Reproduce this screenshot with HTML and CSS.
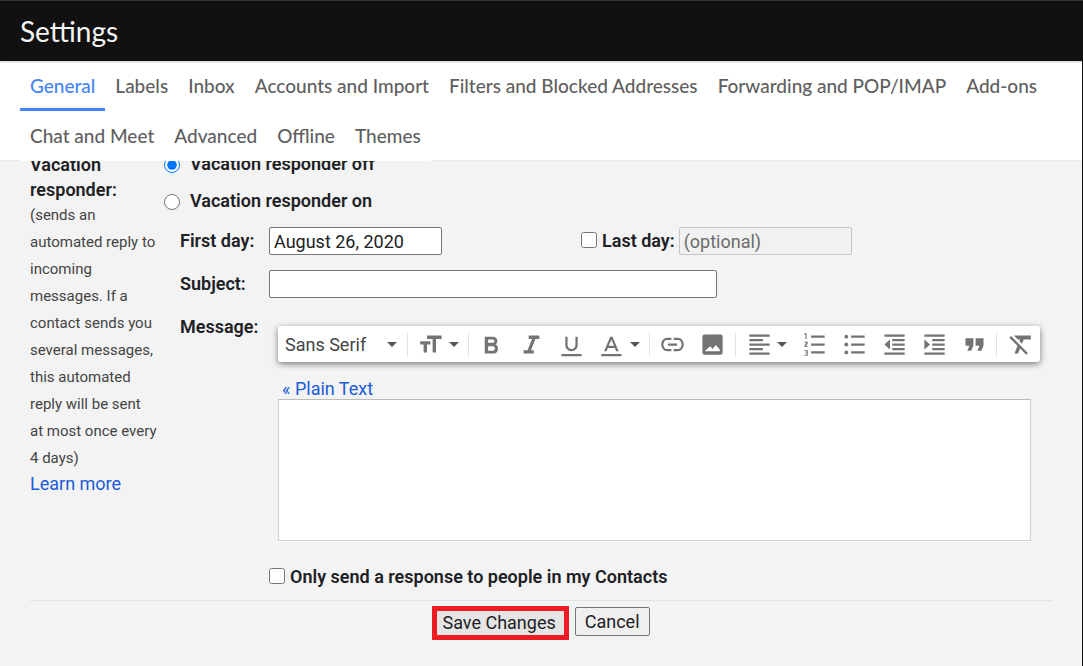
FILE: index.html
```html
<!DOCTYPE html>
<html lang="en">
<head>
<meta charset="utf-8">
<title>Settings</title>
<meta name="viewport" content="width=device-width, initial-scale=1">
<link rel="stylesheet" href="styles.css">
</head>
<body>
<header class="titlebar"><h1>Settings</h1></header>
<div class="page">
  <nav class="tabs" aria-label="Settings sections">
    <a class="tab active" href="#general">General</a>
    <a class="tab" href="#labels">Labels</a>
    <a class="tab" href="#inbox">Inbox</a>
    <a class="tab" href="#accounts">Accounts and Import</a>
    <a class="tab" href="#filters">Filters and Blocked Addresses</a>
    <a class="tab" href="#forwarding">Forwarding and POP/IMAP</a>
    <a class="tab" href="#addons">Add-ons</a>
    <a class="tab" href="#chat">Chat and Meet</a>
    <a class="tab" href="#advanced">Advanced</a>
    <a class="tab" href="#offline">Offline</a>
    <a class="tab" href="#themes">Themes</a>
  </nav>
  <main>
    <form class="settings">
      <section class="setting">
        <div class="about">
          <h2>Vacation responder:</h2>
          <p>(sends an automated reply to incoming messages. If a contact sends you several messages, this automated reply will be sent<br>at most once every<br>4 days)</p>
          <a class="link" href="#learn">Learn more</a>
        </div>
        <div class="controls">
          <label class="radio-row"><input type="radio" name="vacation" checked>Vacation responder off</label>
          <label class="radio-row"><input type="radio" name="vacation">Vacation responder on</label>
          <div class="fields">
            <label for="first">First day:</label>
            <div class="dates">
              <input class="text date" id="first" type="text" value="August 26, 2020">
              <div class="last-day">
                <label class="check"><input type="checkbox">Last day:</label>
                <input class="text date" type="text" placeholder="(optional)" aria-label="Last day" disabled>
              </div>
            </div>
            <label for="subject">Subject:</label>
            <input class="text subject" id="subject" type="text">
            <label class="message-label" for="message">Message:</label>
            <div class="editor">
              <div class="toolbar" role="toolbar" aria-label="Formatting">
                <div class="font-picker"><select aria-label="Font"><option>Sans Serif</option></select><i class="caret"></i></div>
                <div class="group">
                  <button type="button" class="tool menu" aria-label="Size"><svg viewBox="0 0 24 24"><path d="M8 4v3h5v12h3V7h5V4zM2 12h3v7h3v-7h3V9H2z"/></svg><i class="caret"></i></button>
                </div>
                <div class="group">
                  <button type="button" class="tool" aria-label="Bold"><svg viewBox="0 0 24 24"><path transform="translate(0 1)" d="M15.6 10.79c.97-.67 1.65-1.77 1.65-2.79 0-2.26-1.75-4-4-4H6v15h8.04c2.09 0 3.71-1.9 3.71-4.29 0-1.72-.86-3.32-2.15-3.92zM9 6.5h4c.83 0 1.5.67 1.5 1.5s-.67 1.5-1.5 1.5H9v-3zm4.5 10H9v-4h4.5c.83 0 1.5.9 1.5 2s-.67 2-1.5 2z"/></svg></button>
                  <button type="button" class="tool" aria-label="Italic"><svg viewBox="0 0 24 24"><path d="M9.500 4v3h3l-4 10H5v3h9v-3h-2.500l4-10H19V4z"/></svg></button>
                  <button type="button" class="tool" aria-label="Underline"><svg viewBox="0 0 24 24"><path d="M12 18c3.310 0 5.500-2.500 5.500-5.500V5h-2v7.500c0 2-1.400 3.500-3.500 3.500s-3.500-1.500-3.500-3.500V5h-2v7.500c0 3 2.190 5.500 5.500 5.500zM3 20.500v2h18v-2z"/></svg></button>
                  <button type="button" class="tool menu" aria-label="Text colour"><svg viewBox="0 0 24 24"><path d="M10 5L4.500 18h2.250l1.120-3h6.250l1.120 3h2.250L12 5zm-1.380 8L11 7.670 13.380 13zM2 20.500v2h18v-2z"/></svg><i class="caret"></i></button>
                </div>
                <div class="group wide">
                  <button type="button" class="tool" aria-label="Link"><svg viewBox="0 0 24 24"><path d="M3.900 12c0-2.200 1.390-4 3.100-4h4V6H7.500C4.200 6 2 9 2 12s2.200 6 5.500 6H11v-2H7c-1.710 0-3.100-1.800-3.100-4zM8 13h8v-2H8zm8.500-7H13v2h4c1.710 0 3.100 1.800 3.100 4s-1.390 4-3.100 4h-4v2h3.500C19.800 18 22 15 22 12s-2.200-6-5.500-6z"/></svg></button>
                  <button type="button" class="tool" aria-label="Image"><svg viewBox="0 0 24 24"><path fill-rule="evenodd" d="M5 3h14a2 2 0 0 1 2 2v14a2 2 0 0 1-2 2H5a2 2 0 0 1-2-2V5a2 2 0 0 1 2-2zm.500 15h13v-1.500l-3.500-4-3 3.500-2-2.500-4.500 4z"/></svg></button>
                </div>
                <div class="group">
                  <button type="button" class="tool menu" aria-label="Align"><svg viewBox="0 0 24 24"><path d="M15 15H3v2h12zm0-8H3v2h12zM3 13h18v-2H3zm0 8h18v-2H3zM3 3v2h18V3z"/></svg><i class="caret"></i></button>
                  <button type="button" class="tool" aria-label="Numbered list"><svg viewBox="0 0 24 24"><path d="M3 17h3v5H3v-1h2v-1H4v-1h1v-1H3zM4 7h1V2H3v1h1zM3 9.500h3v1.600L4.300 13H6v1H3v-1.200l1.800-2.300H3zM9 4v2h12V4zm0 16h12v-2H9zm0-7h12v-2H9z"/></svg></button>
                  <button type="button" class="tool" aria-label="Bulleted list"><svg viewBox="0 0 24 24"><path d="M9 4v2h12V4zm0 16h12v-2H9zm0-7h12v-2H9z"/><circle cx="4.700" cy="5" r="1.700"/><circle cx="4.700" cy="12" r="1.700"/><circle cx="4.700" cy="19" r="1.700"/></svg></button>
                  <button type="button" class="tool" aria-label="Indent less"><svg viewBox="0 0 24 24"><path d="M10 17h11v-2H10zm-7-5l5 4.500v-9zm0 9h18v-2H3zM3 3v2h18V3zm7 6h11V7H10zm0 4h11v-2H10z"/></svg></button>
                  <button type="button" class="tool" aria-label="Indent more"><svg viewBox="0 0 24 24"><path d="M3 21h18v-2H3zM3 7.500v9L8 12zM10 17h11v-2H10zM3 3v2h18V3zm7 6h11V7H10zm0 4h11v-2H10z"/></svg></button>
                  <button type="button" class="tool" aria-label="Quote"><svg viewBox="0 0 24 24"><path d="M4 6.500h7V13l-2 4.500H5.500L7.500 13H4zM13 6.500h7V13l-2 4.500h-3.500l2-4.500H13z"/></svg></button>
                </div>
                <div class="group last">
                  <button type="button" class="tool" aria-label="Remove formatting"><svg viewBox="0 0 24 24"><path d="M4.500 4.500L3 6l7.200 7.200L7.500 20h3.200l1.800-4.500L18 21l1.500-1.500zM7 4l3.500 3.500h2l-.600 1.600 2.300 2.300 1.600-3.900H22V4z"/></svg></button>
                </div>
              </div>
              <a class="link plain" href="#plain">« Plain Text</a>
              <textarea id="message"></textarea>
            </div>
          </div>
          <label class="check contacts"><input type="checkbox">Only send a response to people in my Contacts</label>
        </div>
      </section>
      <div class="actions">
        <button type="button" class="save">Save Changes</button>
        <button type="button" class="cancel">Cancel</button>
      </div>
    </form>
  </main>
</div>
</body>
</html>
```
FILE: styles.css
```css
* { box-sizing: border-box; }
body {
  margin: 0;
  min-height: 100vh;
  display: flex;
  flex-direction: column;
  font: 18px/24px Roboto, sans-serif;
  color: #202124;
  background: #f3f3f3;
}
.titlebar {
  padding: 14px 20px;
  background: #111;
  border-top: 1px solid #333;
  position: relative;
  z-index: 2;
  box-shadow: 0 1px 2px rgba(0, 0, 0, .2);
}
h1 {
  margin: 0;
  font: 400 28px/32px Lato, sans-serif;
  color: #f4f4f4;
}
.page { flex: 1; border-right: 1px solid #111; }
.tabs {
  display: flex;
  flex-wrap: wrap;
  padding: 0 0 0 20px;
  background: #fff;
  box-shadow: inset 0 -1px #e8ecf0;
  position: relative;
  z-index: 1;
}
.tab {
  height: 50px;
  padding: 0 10px;
  border-bottom: 3px solid #fff;
  background: #fff;
  font: 500 19px/50px Lato, sans-serif;
  color: #5f5f5f;
  text-decoration: none;
  white-space: nowrap;
}
.tab.active { color: #4285f4; border-color: #4285f4; }
main { margin-top: -9px; padding: 0 30px 24px; }
.setting {
  display: grid;
  grid-template-columns: 134px 1fr;
  padding-bottom: 11px;
  border-bottom: 1px solid #e3e3e3;
}
h2 { margin: 0; font-size: 18px; line-height: 25px; }
.about h2, .controls label { font-weight: 600; }
.about h2 { padding-right: 30px; }
.about p { margin: 0; font-size: 15px; line-height: 27px; color: #444; }
.link { color: #1a5cd8; text-decoration: none; }
input[type="radio"], input[type="checkbox"] { width: 16px; height: 16px; margin: 0; }
.radio-row {
  display: flex;
  align-items: center;
  gap: 10px;
  height: 24px;
  margin-bottom: 13px;
}
.radio-row input { margin-top: 2px; }
.fields {
  display: grid;
  grid-template-columns: 89px 1fr;
  row-gap: 15px;
  padding: 1px 0 0 16px;
}
.fields > label { line-height: 28px; }
.text {
  height: 28px;
  padding: 0 4px;
  border: 1px solid #767676;
  border-radius: 2px;
  background: #fff;
  font: 18px/24px Roboto, sans-serif;
  color: #202124;
}
.text:disabled { background: #f1f1f1; border-color: #c6c6c6; }
.text::placeholder { color: #6b6b6b; }
.date { width: 173px; }
.dates { display: flex; gap: 139px; }
.last-day { display: flex; gap: 4px; }
.check { display: flex; align-items: center; gap: 5px; }
.check input { margin-bottom: 3px; }
.subject { width: 448px; }
.editor { padding: 13px 12px 0 9px; }
.toolbar {
  display: flex;
  align-items: center;
  height: 36px;
  background: #fff;
  border-radius: 3px;
  box-shadow: 0 2px 6px rgba(0, 0, 0, .5);
}
.font-picker { position: relative; width: 129px; }
.font-picker select {
  appearance: none;
  width: 100%;
  padding: 1px 7px 0;
  border: 0;
  background: none;
  font: 18px/24px Roboto, sans-serif;
  color: #444;
}
.font-picker .caret { position: absolute; right: 10px; top: 10px; }
.caret {
  flex: none;
  border: 5px solid transparent;
  border-top-color: #555;
  border-bottom: 0;
}
.group {
  display: flex;
  height: 25px;
  padding: 0 2px;
  border-left: 1px solid #e5e5e5;
}
.group.wide { padding-right: 3px; }
.group.last { padding-right: 1px; }
.tool {
  display: flex;
  align-items: center;
  justify-content: center;
  width: 40px;
  height: 25px;
  padding: 0;
  border: 0;
  background: none;
}
.tool.menu { width: 56px; gap: 4px; }
.tool svg { flex: none; width: 27px; height: 27px; fill: #737373; }
.plain { display: block; margin-top: 16px; padding-left: 4px; line-height: 21px; }
textarea {
  display: block;
  width: calc(100% - 9px);
  height: 142px;
  border: 1px solid #d0d0d0;
  border-top-color: #bbb;
  border-radius: 0;
  background: #fff;
  resize: none;
  box-shadow: 0 1px #fff;
  font: 18px/24px Roboto, sans-serif;
}
.contacts { padding-left: 105px; margin-top: 24px; }
.actions { display: flex; justify-content: center; gap: 6px; padding-top: 5px; }
.actions button {
  font: 18px/24px Roboto, sans-serif;
  color: #202124;
}
.save {
  height: 34px;
  padding: 0 8px 4px 5px;
  border: 5px solid #ed1c24;
  background: #e5e5e5;
}
.cancel {
  height: 29px;
  margin-top: 1px;
  padding: 0 9px;
  border: 1px solid #767676;
  border-radius: 2px;
  background: #efefef;
}
```
